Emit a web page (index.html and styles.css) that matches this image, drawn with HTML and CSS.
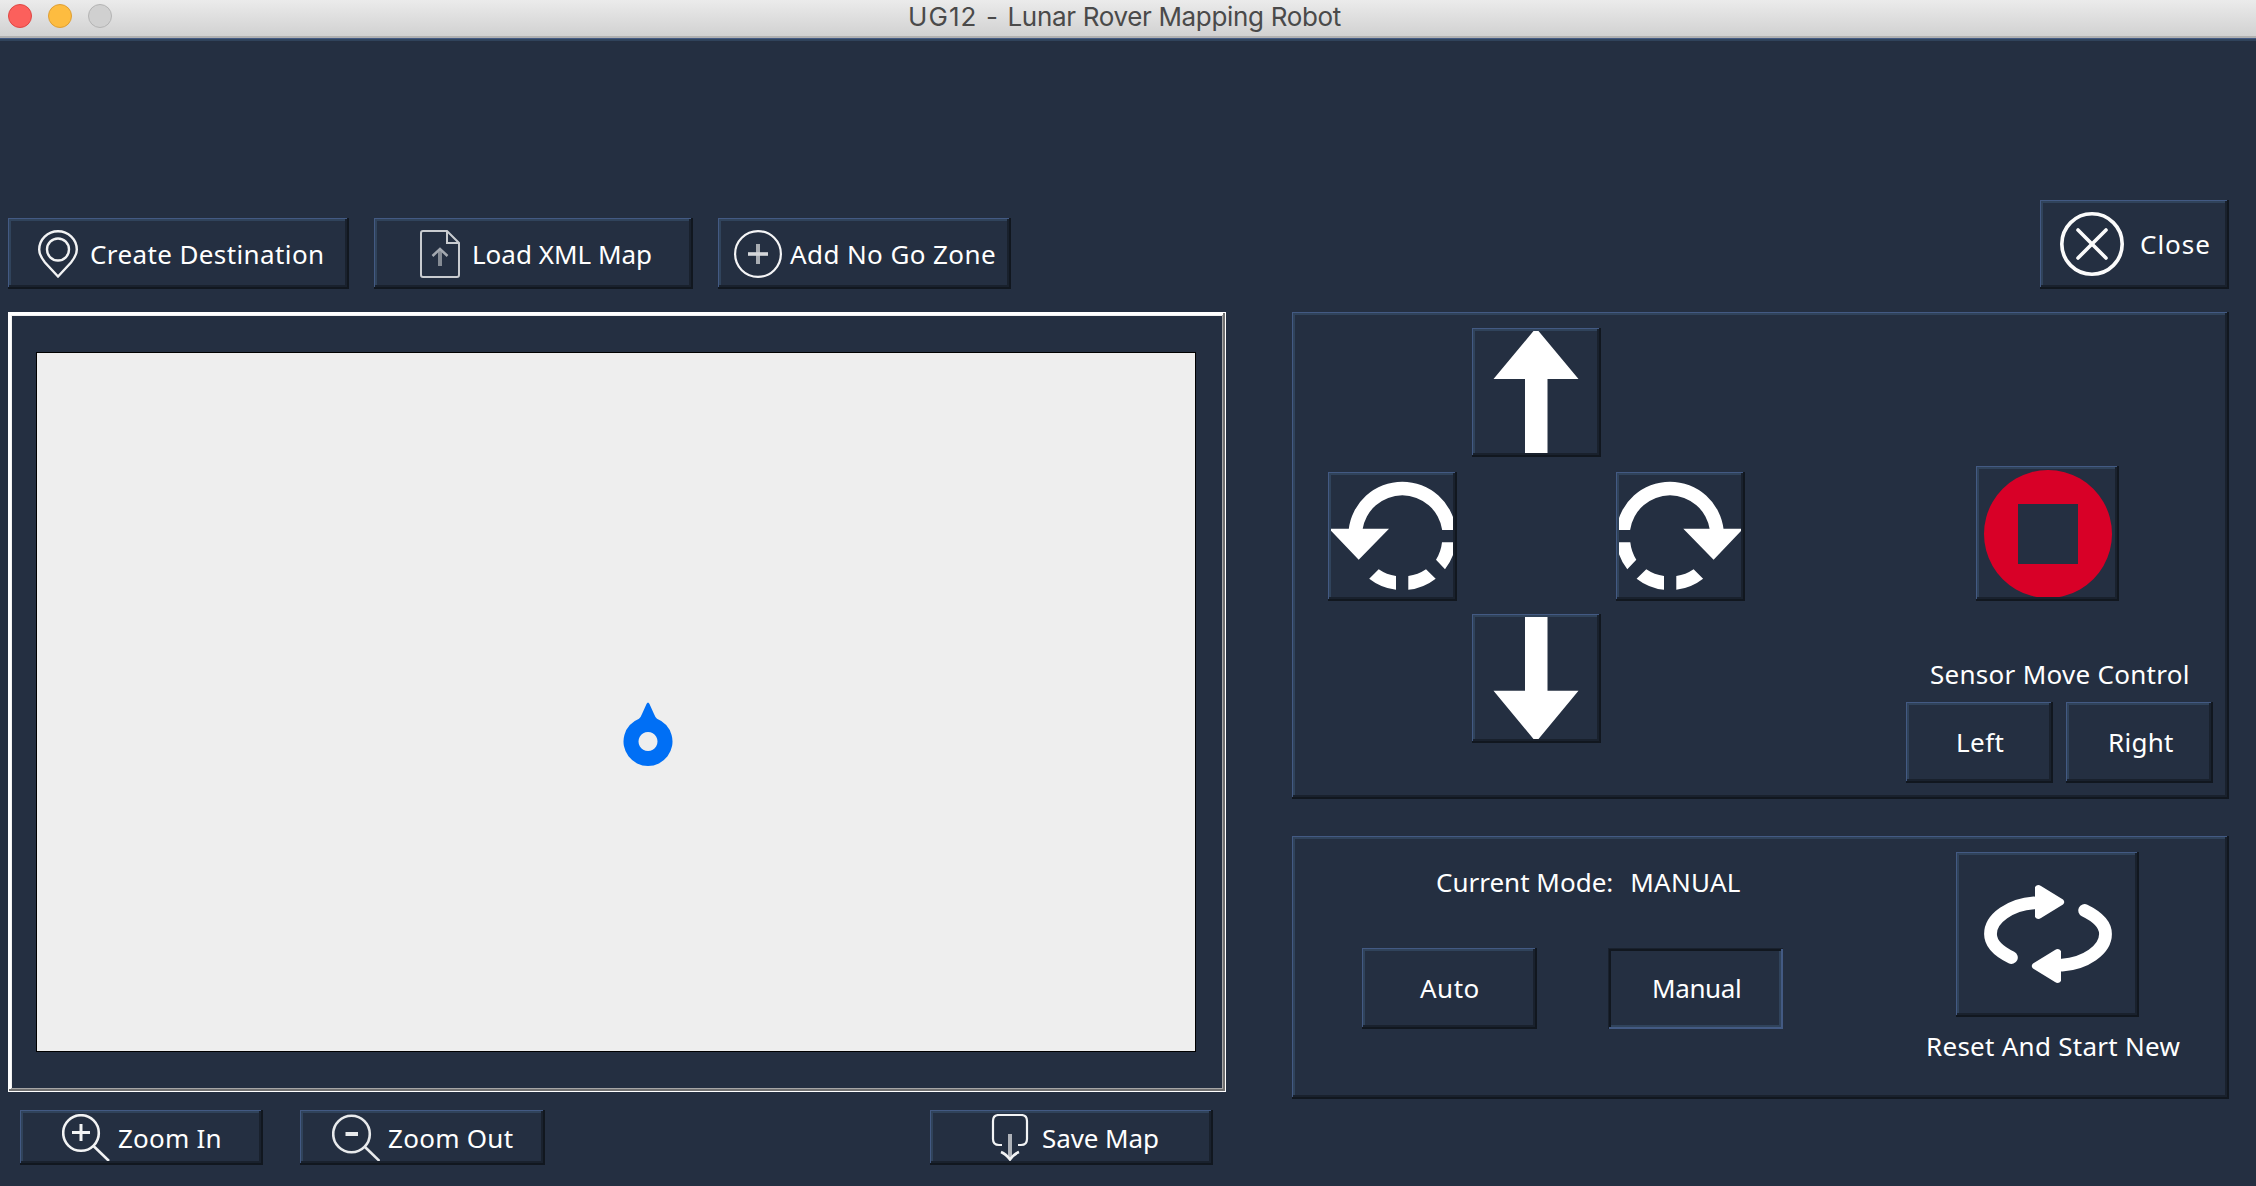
FILE: index.html
```html
<!DOCTYPE html>
<html lang="en">
<head>
<meta charset="utf-8">
<title>UG12 - Lunar Rover Mapping Robot</title>
<link rel="stylesheet" href="styles.css">
</head>
<body>
<header class="titlebar">
  <div class="lights"><span class="light light-close"></span><span class="light light-min"></span><span class="light light-off"></span></div>
  <h1 class="title"><span class="title-code">UG12 - </span>Lunar Rover Mapping Robot</h1>
</header>
<main class="window">
  <section class="map-side">
    <div class="toolbar">
      <button class="bevel btn btn-create">
        <svg width="40" height="48" viewBox="0 0 40 48" fill="none" stroke="#f2f3f4" stroke-width="2.4"><path d="M20 46.5L7 32.5C3 27.500 1.200 24 1.200 19.500A18.800 18.300 0 0 1 38.800 19.500C38.800 24 37 27.500 33 32.500Z"/><circle cx="20" cy="19.500" r="11"/></svg>
        <span class="label">Create Destination</span>
      </button>
      <button class="bevel btn btn-load">
        <svg width="40" height="48" viewBox="0 0 40 48" fill="none" stroke="#c9ccd0" stroke-width="2"><path d="M3 1H27L39 13V45Q39 47 37 47H3Q1 47 1 45V3Q1 1 3 1ZM27 1V13H39"/><path d="M20 19V36" stroke="#858b94" stroke-width="4"/><path d="M12.500 26L20 19L27.500 26" stroke="#a4a9b0" stroke-width="2.500"/></svg>
        <span class="label">Load XML Map</span>
      </button>
      <button class="bevel btn btn-nogo">
        <svg width="48" height="48" viewBox="0 0 48 48" fill="none"><circle cx="24" cy="24" r="22.900" stroke="#f5f5f6" stroke-width="2.200"/><path d="M24 14V34" stroke="#a9adb3" stroke-width="4"/><path d="M14 24H34" stroke="#d5d7da" stroke-width="3.600"/></svg>
        <span class="label">Add No Go Zone</span>
      </button>
    </div>
    <div class="map-frame"><div class="map">
      <svg class="rover" width="50" height="66" viewBox="0 0 50 66"><path fill="#006ff5" fill-rule="evenodd" d="M23.500 2Q25 -1 26.500 2L31 12Q32 14.800 34 16.700A24.500 24.500 0 1 1 16 16.700Q18 14.800 19 12ZM25 30a9.500 9.500 0 1 0 .01 0Z"/></svg>
    </div></div>
    <div class="map-tools">
      <button class="bevel btn btn-in">
        <svg width="48" height="47" viewBox="0 0 48 47" fill="none" stroke="#f2f3f4" stroke-width="2.600"><circle cx="19" cy="19" r="17.800"/><path d="M31 31.500L47 47"/><path d="M10 18.500H28M19 10V27" stroke-width="3"/></svg>
        <span class="label">Zoom In</span>
      </button>
      <button class="bevel btn btn-out">
        <svg width="48" height="47" viewBox="0 0 48 47" fill="none" stroke="#e8eaec" stroke-width="2.600"><circle cx="19.500" cy="20" r="18.300"/><path d="M32.500 32.500L47.500 47"/><path d="M13.500 20H26" stroke-width="4"/></svg>
        <span class="label">Zoom Out</span>
      </button>
      <button class="bevel btn btn-save">
        <svg width="40" height="47" viewBox="0 0 40 47" fill="none" stroke="#f2f3f4" stroke-width="2.200"><path d="M12 31H9Q3 31 3 25V7Q3 1 9 1H31Q37 1 37 7V25Q37 31 31 31H28"/><path d="M20 20V45" stroke="#aeb2b8" stroke-width="4"/><path d="M11 38Q16 40 20 45.500Q24 40 29 38" stroke-width="2.600"/></svg>
        <span class="label">Save Map</span>
      </button>
    </div>
  </section>
  <section class="control-side">
    <button class="bevel btn btn-close">
      <svg width="64" height="64" viewBox="0 0 64 64" fill="none" stroke="#fbfbfb" stroke-width="3.600"><circle cx="32" cy="32" r="30.200"/><path d="M18 18L46 46M46 18L18 46" stroke-linecap="round"/></svg>
      <span class="label">Close</span>
    </button>
    <div class="bevel panel drive">
      <div class="dpad">
        <button class="bevel key key-up" aria-label="Forward"><svg width="122" height="122" viewBox="0 0 122 122" fill="#fff"><path d="M58.500 0H63.500L103.500 48H72.500V122H50V48H18.500Z"/></svg></button>
        <button class="bevel key key-ccw" aria-label="Rotate left"><svg width="122" height="122" viewBox="0 0 122 122" fill="#fff"><path d="M17.600 55A54 54 0 0 1 125 55H111.200A40.300 40.300 0 0 0 31.400 55ZM111 67.300H125A54 54 0 0 1 114 94.300L105 84.700A40.300 40.300 0 0 0 111 67.300ZM104.700 103.700A54 54 0 0 1 77.300 114.800V101A40.300 40.300 0 0 0 95 94.300ZM65 114.800A54 54 0 0 1 38.200 103.700L47.700 94.300A40.300 40.300 0 0 0 65 101ZM-2 53.700H58L27.700 84.700Z"/></svg></button>
        <button class="bevel key key-cw" aria-label="Rotate right"><svg width="122" height="122" viewBox="0 0 122 122" fill="#fff"><path transform="matrix(-1 0 0 1 122.300 0)" d="M17.600 55A54 54 0 0 1 125 55H111.200A40.300 40.300 0 0 0 31.400 55ZM111 67.300H125A54 54 0 0 1 114 94.300L105 84.700A40.300 40.300 0 0 0 111 67.300ZM104.700 103.700A54 54 0 0 1 77.300 114.800V101A40.300 40.300 0 0 0 95 94.300ZM65 114.800A54 54 0 0 1 38.200 103.700L47.700 94.300A40.300 40.300 0 0 0 65 101ZM-2 53.700H58L27.700 84.700Z"/></svg></button>
        <button class="bevel key key-down" aria-label="Backward"><svg width="122" height="122" viewBox="0 0 122 122" fill="#fff"><path d="M50 0H72.500V73.700H103.500L63.500 122H58.500L18.500 73.700H50Z"/></svg></button>
      </div>
      <div class="sensor">
        <button class="bevel stop" aria-label="Stop"><svg width="136" height="128" viewBox="0 0 136 128"><path fill="#d80027" fill-rule="evenodd" d="M69 1a64 64 0 1 0 .01 0ZM39 35H99V95H39Z"/></svg></button>
        <div class="label sensor-title">Sensor Move Control</div>
        <div class="sensor-row">
          <button class="bevel btn btn-left"><span class="label">Left</span></button>
          <button class="bevel btn btn-right"><span class="label">Right</span></button>
        </div>
      </div>
    </div>
    <div class="bevel panel mode">
      <div class="mode-pick">
        <div class="mode-line"><span class="label mode-key">Current Mode:</span><span class="label mode-value">MANUAL</span></div>
        <div class="mode-row">
          <button class="bevel btn btn-auto"><span class="label">Auto</span></button>
          <button class="bevel pressed btn btn-manual"><span class="label">Manual</span></button>
        </div>
      </div>
      <div class="reset">
        <button class="bevel btn-reset" aria-label="Reset"><svg width="128" height="100" viewBox="0 0 128 100"><g id="half"><path fill="none" stroke="#fff" stroke-width="12.800" stroke-linecap="round" d="M27.400 73.500C14 67 6.500 59 6.500 50C6.500 34 27 20.500 50 18.900"/><path fill="#fff" d="M51 3Q53.500 -.5 57 2L79 15.500Q81.500 18 79 20.500L57 34Q53.500 36.500 51 33Z"/></g><use href="#half" transform="rotate(180 64 50)"/></svg></button>
        <div class="label reset-title">Reset And Start New</div>
      </div>
    </div>
  </section>
</main>
</body>
</html>
```
FILE: styles.css
```css
* { box-sizing: border-box; }
body {
  margin: 0;
  width: 2256px;
  height: 1186px;
  overflow: hidden;
  background: #242f41;
  color: #fff;
  font: 26px/36px "Noto Sans", sans-serif;
}
svg { display: block; flex: none; }
button { border: 0; margin: 0; padding: 0; font: inherit; color: inherit; text-align: left; }

/* Title bar */
.titlebar {
  height: 38px;
  display: grid;
  grid-template-columns: 908px 1fr;
  background: linear-gradient(#ebebeb, #d2d2d2 35px);
  border-bottom: 2px solid #b0b0b0;
}
.lights { display: flex; gap: 16px; padding: 4px 0 0 8px; }
.light { width: 24px; height: 24px; border-radius: 50%; border: 1px solid; }
.light-close { background: #fc605c; border-color: #df4744; }
.light-min { background: #fdbc40; border-color: #de9f34; }
.light-off { background: #d0d0d0; border-color: #b4b4b4; }
.title { margin: 0; font: 400 26px/34px Inter, sans-serif; letter-spacing: -.33px; color: #4a4a4a; white-space: pre; }
.title-code { letter-spacing: 1.1px; }

/* Content */
.window {
  height: 1148px;
  display: grid;
  grid-template-columns: 1218px 937px;
  column-gap: 66px;
  padding-left: 8px;
  box-shadow: inset 0 1px 0 #435a83, inset 0 3px 0 #30435b;
}

/* Raised edges of buttons and panels */
.bevel {
  background: #242f41;
  box-shadow: inset -2px -2px 0 #11171f, inset 1px 1px 0 #435a83, inset -4px -4px 0 #19212d, inset 3px 3px 0 #30435b;
}
.pressed {
  box-shadow: inset 1px 1px 0 #19212d, inset -2px -2px 0 #435a83, inset 3px 3px 0 #11171f, inset -4px -4px 0 #30435b;
}
.btn { display: flex; align-items: center; flex: none; padding-bottom: 2px; }
.label { white-space: pre; }

/* Map side */
.map-side { display: flex; flex-direction: column; padding-top: 180px; }
.toolbar { display: flex; gap: 25px; height: 71px; }
.toolbar .btn { align-items: flex-start; padding-top: 12px; }
.toolbar .label { padding-top: 6px; }
.btn-create { width: 341px; padding-left: 30px; gap: 12px; letter-spacing: .39px; }
.btn-load { width: 319px; padding-left: 46px; gap: 12px; }
.btn-nogo { width: 293px; padding-left: 16px; gap: 8px; letter-spacing: .4px; }
.map-frame {
  margin-top: 23px;
  height: 780px;
  padding: 40px 30px 40px 28px;
  box-shadow: inset 0 0 0 1px #fff, inset -3px -3px 0 #707070, inset 3px 3px 0 #fff, inset -4px -4px 0 #a6a6a6, inset 4px 4px 0 #f0f0f0;
}
.map { height: 700px; background: #eee; border: 1px solid #000; padding: 349px 0 0 586px; }
.map-tools { display: flex; margin-top: 18px; height: 55px; padding-left: 12px; }
.map-tools .btn { align-items: flex-start; padding-top: 4px; }
.map-tools .label { padding-top: 6px; }
.btn-in { width: 243px; padding-left: 42px; gap: 8px; letter-spacing: .2px; }
.btn-out { width: 245px; padding-left: 32px; gap: 8px; margin-left: 37px; letter-spacing: .27px; }
.btn-save { width: 283px; padding-left: 60px; gap: 12px; margin-left: 385px; letter-spacing: -.09px; }

/* Control side */
.control-side { display: flex; flex-direction: column; padding-top: 162px; }
.btn-close { align-self: flex-end; width: 189px; height: 89px; padding-left: 20px; gap: 16px; letter-spacing: .99px; }
.panel { display: flex; justify-content: space-between; flex: none; }
.drive { margin-top: 23px; height: 487px; padding: 16px 16px 16px 36px; }
.dpad {
  display: grid;
  grid-template: "a up b" 129px "ccw c cw" 129px "d down e" 129px / 129px 129px 129px;
  column-gap: 15px;
  row-gap: 15px;
  align-content: start;
}
.key { padding: 3px 4px 4px 3px; overflow: hidden; }
.key-up { grid-area: up; }
.key-ccw { grid-area: ccw; }
.key-cw { grid-area: cw; }
.key-down { grid-area: down; margin-top: -2px; height: 129px; }
.sensor { display: flex; flex-direction: column; padding-top: 138px; width: 307px; }
.stop { width: 143px; height: 135px; padding: 3px 4px 4px 3px; margin-left: 70px; }
.sensor-title { margin-top: 55px; padding-left: 24px; height: 36px; letter-spacing: .28px; margin-bottom: 10px; }
.sensor-row { display: flex; gap: 13px; height: 81px; }
.btn-left { width: 147px; padding-left: 50px; letter-spacing: .42px; }
.btn-right { width: 147px; padding-left: 42px; letter-spacing: .27px; }

.mode { margin-top: 37px; height: 263px; padding: 16px 16px 0 70px; }
.mode-pick { padding-top: 12px; }
.mode-line { display: flex; padding-left: 74px; }
.mode-value { margin-left: 17px; letter-spacing: .25px; }
.mode-row { display: flex; gap: 71px; height: 81px; margin-top: 48px; }
.btn-auto { width: 175px; padding-left: 58px; letter-spacing: .48px; }
.btn-manual { width: 175px; padding-left: 44px; letter-spacing: -.38px; }
.reset { width: 287px; }
.btn-reset { display: block; width: 183px; height: 165px; margin-left: 30px; padding: 32px 27px 33px 28px; }
.reset-title { margin-top: 11px; letter-spacing: .27px; }
```
